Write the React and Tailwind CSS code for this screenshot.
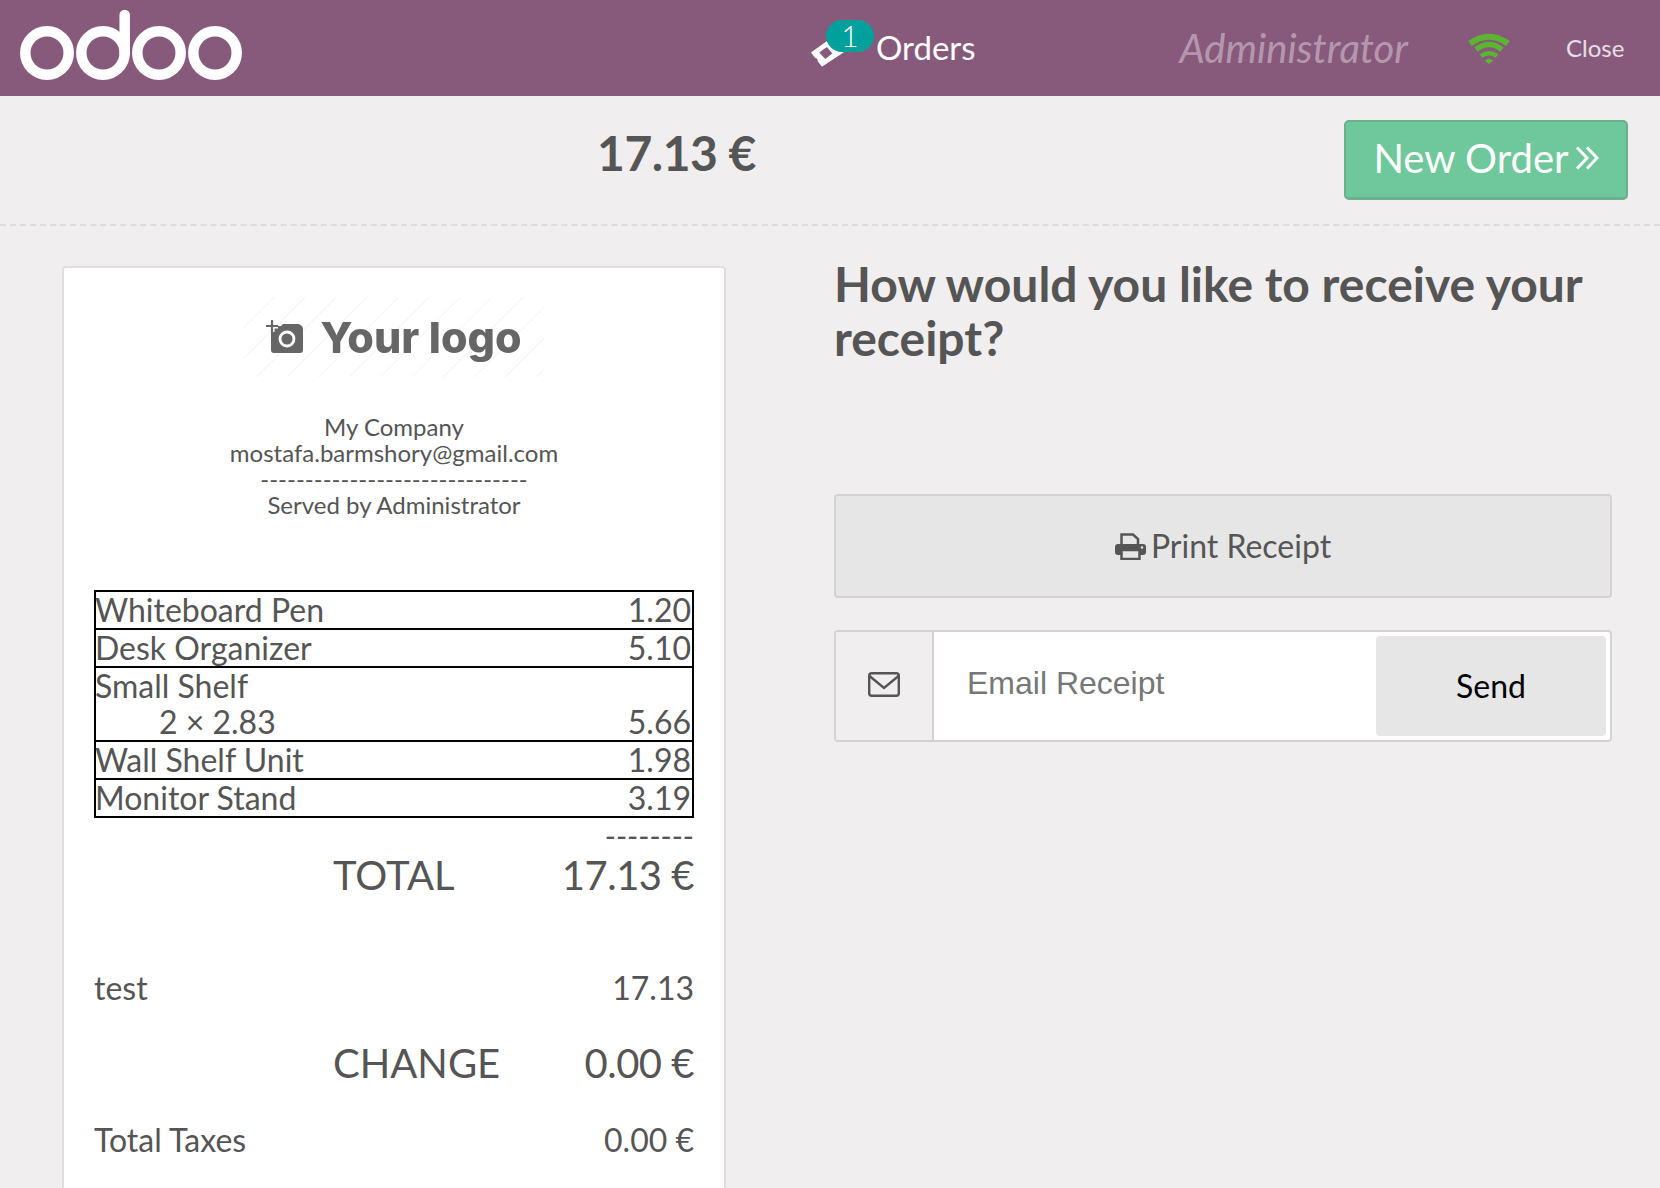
import React from 'react';

const lines = [
  { name: 'Whiteboard Pen', price: '1.20' },
  { name: 'Desk Organizer', price: '5.10' },
  { name: 'Small Shelf', qty: '2 × 2.83', price: '5.66' },
  { name: 'Wall Shelf Unit', price: '1.98' },
  { name: 'Monitor Stand', price: '3.19' },
];

function OdooLogo() {
  return (
    <svg width="244" height="96" viewBox="0 0 244 96" className="shrink-0">
      <g fill="none" stroke="#fff" strokeWidth="10.5">
        <circle cx="47" cy="53" r="21.7" />
        <circle cx="103" cy="53" r="21.7" />
        <circle cx="159" cy="53" r="21.7" />
        <circle cx="215" cy="53" r="21.7" />
        <path d="M124.7 53V15" strokeLinecap="round" />
      </g>
    </svg>
  );
}

function TicketIcon({ className }) {
  return (
    <svg width="35" height="33" viewBox="0 0 32 30" className={className}>
      <path d="M0 15 21 0l10 14-21 14z" fill="#fff" />
      <path d="M7.5 15l7-5 5 6-6.5 5z" fill="#875a7b" />
      <circle cx="4" cy="22" r="2" fill="#875a7b" />
    </svg>
  );
}

function WifiIcon({ className }) {
  return (
    <svg width="44" height="31" viewBox="0 0 44 31" className={className}>
      <g fill="none" stroke="#5cb531">
        <path d="M3 10.5Q22-3 41 10.5" strokeWidth="6" />
        <path d="M9 16.5Q22 6.5 35 16.5" strokeWidth="5.5" />
        <path d="M14 23Q22 17.5 30 23" strokeWidth="4.5" />
      </g>
      <path d="M17.5 27.5 22 25.5l4.5 2L22 31z" fill="#5cb531" />
    </svg>
  );
}

function ChevronsIcon() {
  return (
    <svg width="24" height="24" viewBox="0 0 24 24" className="shrink-0">
      <path d="M2 1.5 12 12 2 22.5M12 1.5 22 12 12 22.5" fill="none" stroke="#fff" strokeWidth="3" />
    </svg>
  );
}

function PrintIcon() {
  return (
    <svg width="31" height="27" viewBox="0 0 31 27" className="shrink-0">
      <path d="M6.5 11V1.5H18l5 4.5V11" fill="none" stroke="#555" strokeWidth="2.5" />
      <rect x="0" y="11" width="31" height="11" rx="3" fill="#555" />
      <rect x="6.5" y="17" width="18" height="9" fill="#e6e6e6" stroke="#555" strokeWidth="2.5" />
      <circle cx="27" cy="14.5" r="1.2" fill="#e6e6e6" />
    </svg>
  );
}

function EnvelopeIcon() {
  return (
    <svg width="32" height="25" viewBox="0 0 32 25" className="shrink-0">
      <rect x="1.2" y="1.2" width="29.6" height="22.6" rx="2.5" fill="none" stroke="#555" strokeWidth="2.4" />
      <path d="M1.5 4 16 16 30.5 4" fill="none" stroke="#555" strokeWidth="2.4" />
    </svg>
  );
}

function CameraPlus() {
  return (
    <svg width="38" height="34" viewBox="0 0 38 34" className="shrink-0 blur-[0.5px]">
      <path d="M5 9l3-3h7l2-2h14c3 0 6 2 6 5v21c0 2-1 3-3 3H8c-2 0-3-1-3-3z" fill="#666" />
      <circle cx="21" cy="19" r="7" fill="none" stroke="#fff" strokeWidth="2.8" />
      <path d="M6 0v12M0 6h12" stroke="#fff" strokeWidth="5" />
      <path d="M6 0v12M0 6h12" stroke="#666" strokeWidth="2.2" />
    </svg>
  );
}

export default function App() {
  return (
    <div className="h-[1188px] overflow-hidden bg-[#f0eeee] font-['Lato','Liberation_Sans',sans-serif] text-[#555555]">
      <header className="flex h-[96px] items-center bg-[#875a7b] text-white">
        <OdooLogo />
        <div className="ml-[567px] flex items-center">
          <div className="relative h-[40px] w-[65px]">
            <TicketIcon className="absolute left-0 top-[8px]" />
            <span className="absolute left-[15px] top-[-8px] flex h-[32px] w-[48px] items-center justify-center rounded-[16px] bg-[#00a09d] pb-[2px] text-[30px] font-light">
              1
            </span>
          </div>
          <span className="text-[33px]">Orders</span>
        </div>
        <span className="ml-[204px] text-[40px] italic text-white/40">Administrator</span>
        <WifiIcon className="ml-[59px] shrink-0" />
        <span className="ml-[55px] text-[24px] text-white/80">Close</span>
      </header>

      <div className="flex h-[130px] items-start border-b-2 border-dashed border-[#dcdcdc]">
        <div className="flex-1 pl-[9px] pt-[28px] text-center text-[48px] font-bold leading-[58px] tracking-[-0.5px]">17.13 €</div>
        <button className="mr-[32px] mt-[24px] flex h-[80px] w-[284px] items-center justify-center gap-[6px] rounded-[5px] border-2 border-b-[3px] border-[#6ab08f] bg-[#6ec89b] pb-[3px] text-[40px] text-white">
          New Order
          <ChevronsIcon />
        </button>
      </div>

      <div className="flex">
        <section className="ml-[62px] mt-[40px] h-[1000px] w-[664px] shrink-0 rounded-[4px] border-2 border-[#dfdfdf] bg-white px-[30px]">
          <div className="mx-auto mt-[29px] flex h-[80px] w-[300px] items-center justify-center gap-[16px] bg-[repeating-linear-gradient(135deg,#ffffff_0,#ffffff_20px,#f8f8f8_21px,#f8f8f8_22px)]">
            <CameraPlus />
            <span className="font-['Inter',sans-serif] text-[43px] font-extrabold leading-none text-[#666666] blur-[0.5px]">Your logo</span>
          </div>
          <div className="mt-[37px] text-center text-[24px] leading-[26px]">
            <div>My Company</div>
            <div>mostafa.barmshory@gmail.com</div>
            <div>------------------------------</div>
            <div>Served by Administrator</div>
          </div>
          <table className="mt-[72px] w-full border-collapse text-[32px] leading-[36px]">
            <tbody>
              {lines.map((line) => (
                <tr key={line.name} className="border-2 border-black">
                  <td className="p-0">
                    <div className="-ml-[1px]">{line.name}</div>
                    {line.qty && <div className="pl-[63px]">{line.qty}</div>}
                  </td>
                  <td className="p-0 pr-[1px] text-right align-bottom">{line.price}</td>
                </tr>
              ))}
            </tbody>
          </table>
          <div className="mt-[4px] h-[27px] text-right text-[30px] leading-[26px]">--------</div>
          <div className="mt-[1px] flex justify-between text-[40px] leading-[50px]">
            <span className="ml-[239px]">TOTAL</span>
            <span className="tracking-[-0.5px]">17.13 €</span>
          </div>
          <div className="mt-[68px] flex justify-between text-[32px] leading-[40px]">
            <span>test</span>
            <span>17.13</span>
          </div>
          <div className="mt-[30px] flex justify-between text-[40px] leading-[50px]">
            <span className="ml-[239px]">CHANGE</span>
            <span className="tracking-[-0.5px]">0.00 €</span>
          </div>
          <div className="mt-[32px] flex justify-between text-[32px] leading-[40px]">
            <span>Total Taxes</span>
            <span>0.00 €</span>
          </div>
        </section>

        <section className="ml-[108px] w-[778px] shrink-0">
          <h1 className="mt-[31px] text-[48px] font-bold leading-[54px]">
            How would you like to receive your receipt?
          </h1>
          <button className="mt-[129px] flex h-[104px] w-full items-center justify-center gap-[5px] rounded-[4px] border-2 border-[#d3d3d3] bg-[#e6e6e6] text-[32px]">
            <PrintIcon />
            Print Receipt
          </button>
          <div className="mt-[32px] flex h-[112px] rounded-[4px] border-2 border-[#d3d3d3] bg-white">
            <div className="flex w-[98px] shrink-0 items-center justify-center border-r-2 border-[#d3d3d3] bg-[#f0eeee] pb-[4px]">
              <EnvelopeIcon />
            </div>
            <div className="flex flex-1 items-center pb-[7px] pl-[33px] font-['Liberation_Sans',sans-serif] text-[32px] text-[#777777]">
              Email Receipt
            </div>
            <button className="my-[4px] mr-[4px] w-[230px] rounded-[4px] bg-[#e6e6e6] text-[32px] text-black">Send</button>
          </div>
        </section>
      </div>
    </div>
  );
}
